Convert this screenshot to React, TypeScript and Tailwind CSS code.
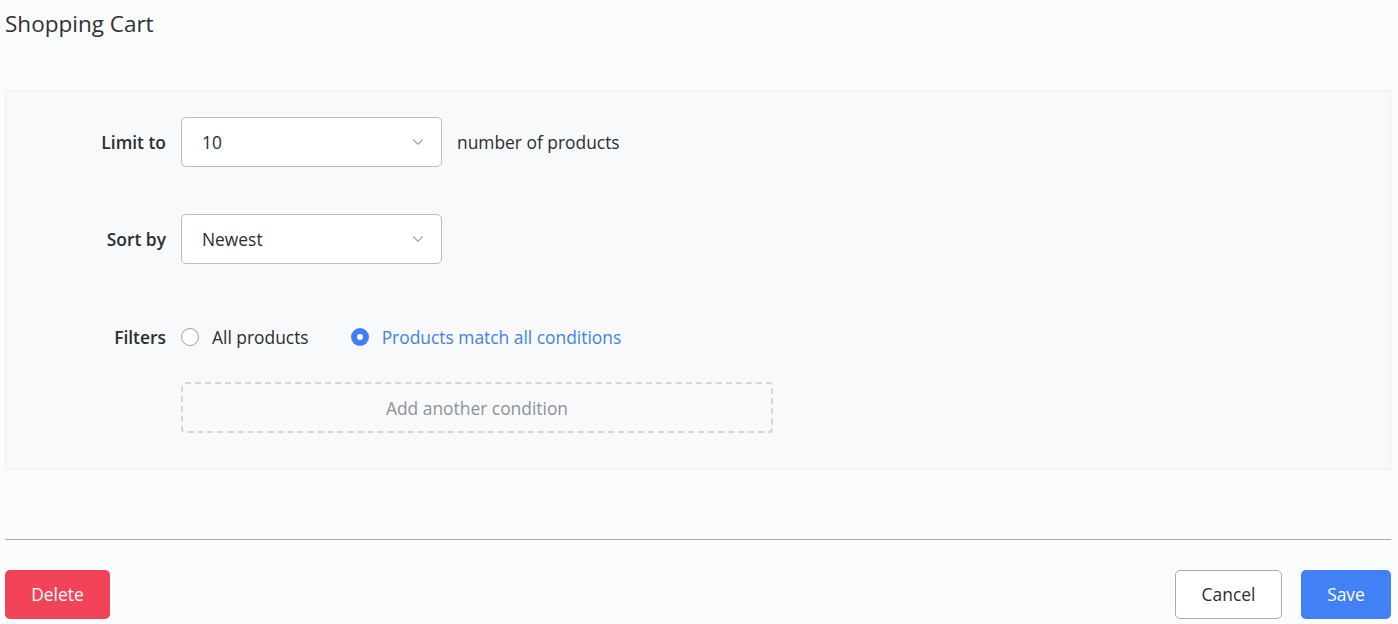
import { ChevronDown } from "lucide-react"

function SelectBox({ value }: { value: string }) {
  return (
    <div className="flex h-[50px] w-[261px] items-center justify-between rounded-[5px] border border-[#b9bcc0] bg-white pl-[20px] pr-[14px] text-[17.4px] text-[#2b2d30]">
      <span>{value}</span>
      <ChevronDown className="h-[18px] w-[18px] text-[#a3a6aa]" strokeWidth={1.5} />
    </div>
  )
}

function Radio({ checked, label }: { checked?: boolean; label: string }) {
  return (
    <label className="flex items-center gap-[13px]">
      {checked ? (
        <span className="flex h-[18px] w-[18px] items-center justify-center rounded-full bg-[#3f7ff3]">
          <span className="h-[6px] w-[6px] rounded-full bg-white" />
        </span>
      ) : (
        <span className="h-[18px] w-[18px] rounded-full border border-[#9da1a6] bg-white" />
      )}
      <span className={checked ? "text-[#3f82ec]" : "text-[#2b2d30]"}>{label}</span>
    </label>
  )
}

export default function App() {
  return (
    <div
      className="min-h-[624px] bg-[#fbfcfc] pl-[5px] pr-[7px] text-[#2b2d30]"
      style={{ fontFamily: '"Open Sans", "Noto Sans", sans-serif' }}
    >
      <h1 className="pt-[8px] text-[22.5px] leading-[31px] text-[#2f3133]">Shopping Cart</h1>

      <div className="mt-[51px] h-[380px] rounded-[3px] border border-[#eceef0] bg-[#f8f9fa] pt-[26px] text-[17.4px]">
        <div className="grid grid-cols-[160px_1fr] items-center gap-x-[15px]">
          <div className="text-right font-semibold">Limit to</div>
          <div className="flex items-center gap-[15px]">
            <SelectBox value="10" />
            <span>number of products</span>
          </div>

          <div className="mt-[47px] text-right font-semibold">Sort by</div>
          <div className="mt-[47px]">
            <SelectBox value="Newest" />
          </div>

          <div className="mt-[60px] text-right font-semibold">Filters</div>
          <div className="mt-[60px] flex items-center gap-[42px]">
            <Radio label="All products" />
            <Radio checked label="Products match all conditions" />
          </div>

          <div />
          <button className="mt-[32px] flex h-[51px] w-[592px] items-center justify-center rounded-[4px] border-2 border-dashed border-[#d3d6da] text-[17.4px] text-[#8d9298]">
            Add another condition
          </button>
        </div>
      </div>

      <div className="mt-[69px] border-t border-[#a9acaf]" />

      <div className="mt-[30px] flex items-center justify-between">
        <button className="h-[49px] w-[105px] rounded-[5px] bg-[#f14458] text-[17.4px] text-white">
          Delete
        </button>
        <div className="flex items-center gap-[19px]">
          <button className="h-[49px] w-[107px] rounded-[5px] border border-[#a9acaf] bg-white text-[17.4px] text-[#2b2d30]">
            Cancel
          </button>
          <button className="h-[49px] w-[90px] rounded-[5px] bg-[#4280f6] text-[17.4px] text-white">
            Save
          </button>
        </div>
      </div>
    </div>
  )
}
